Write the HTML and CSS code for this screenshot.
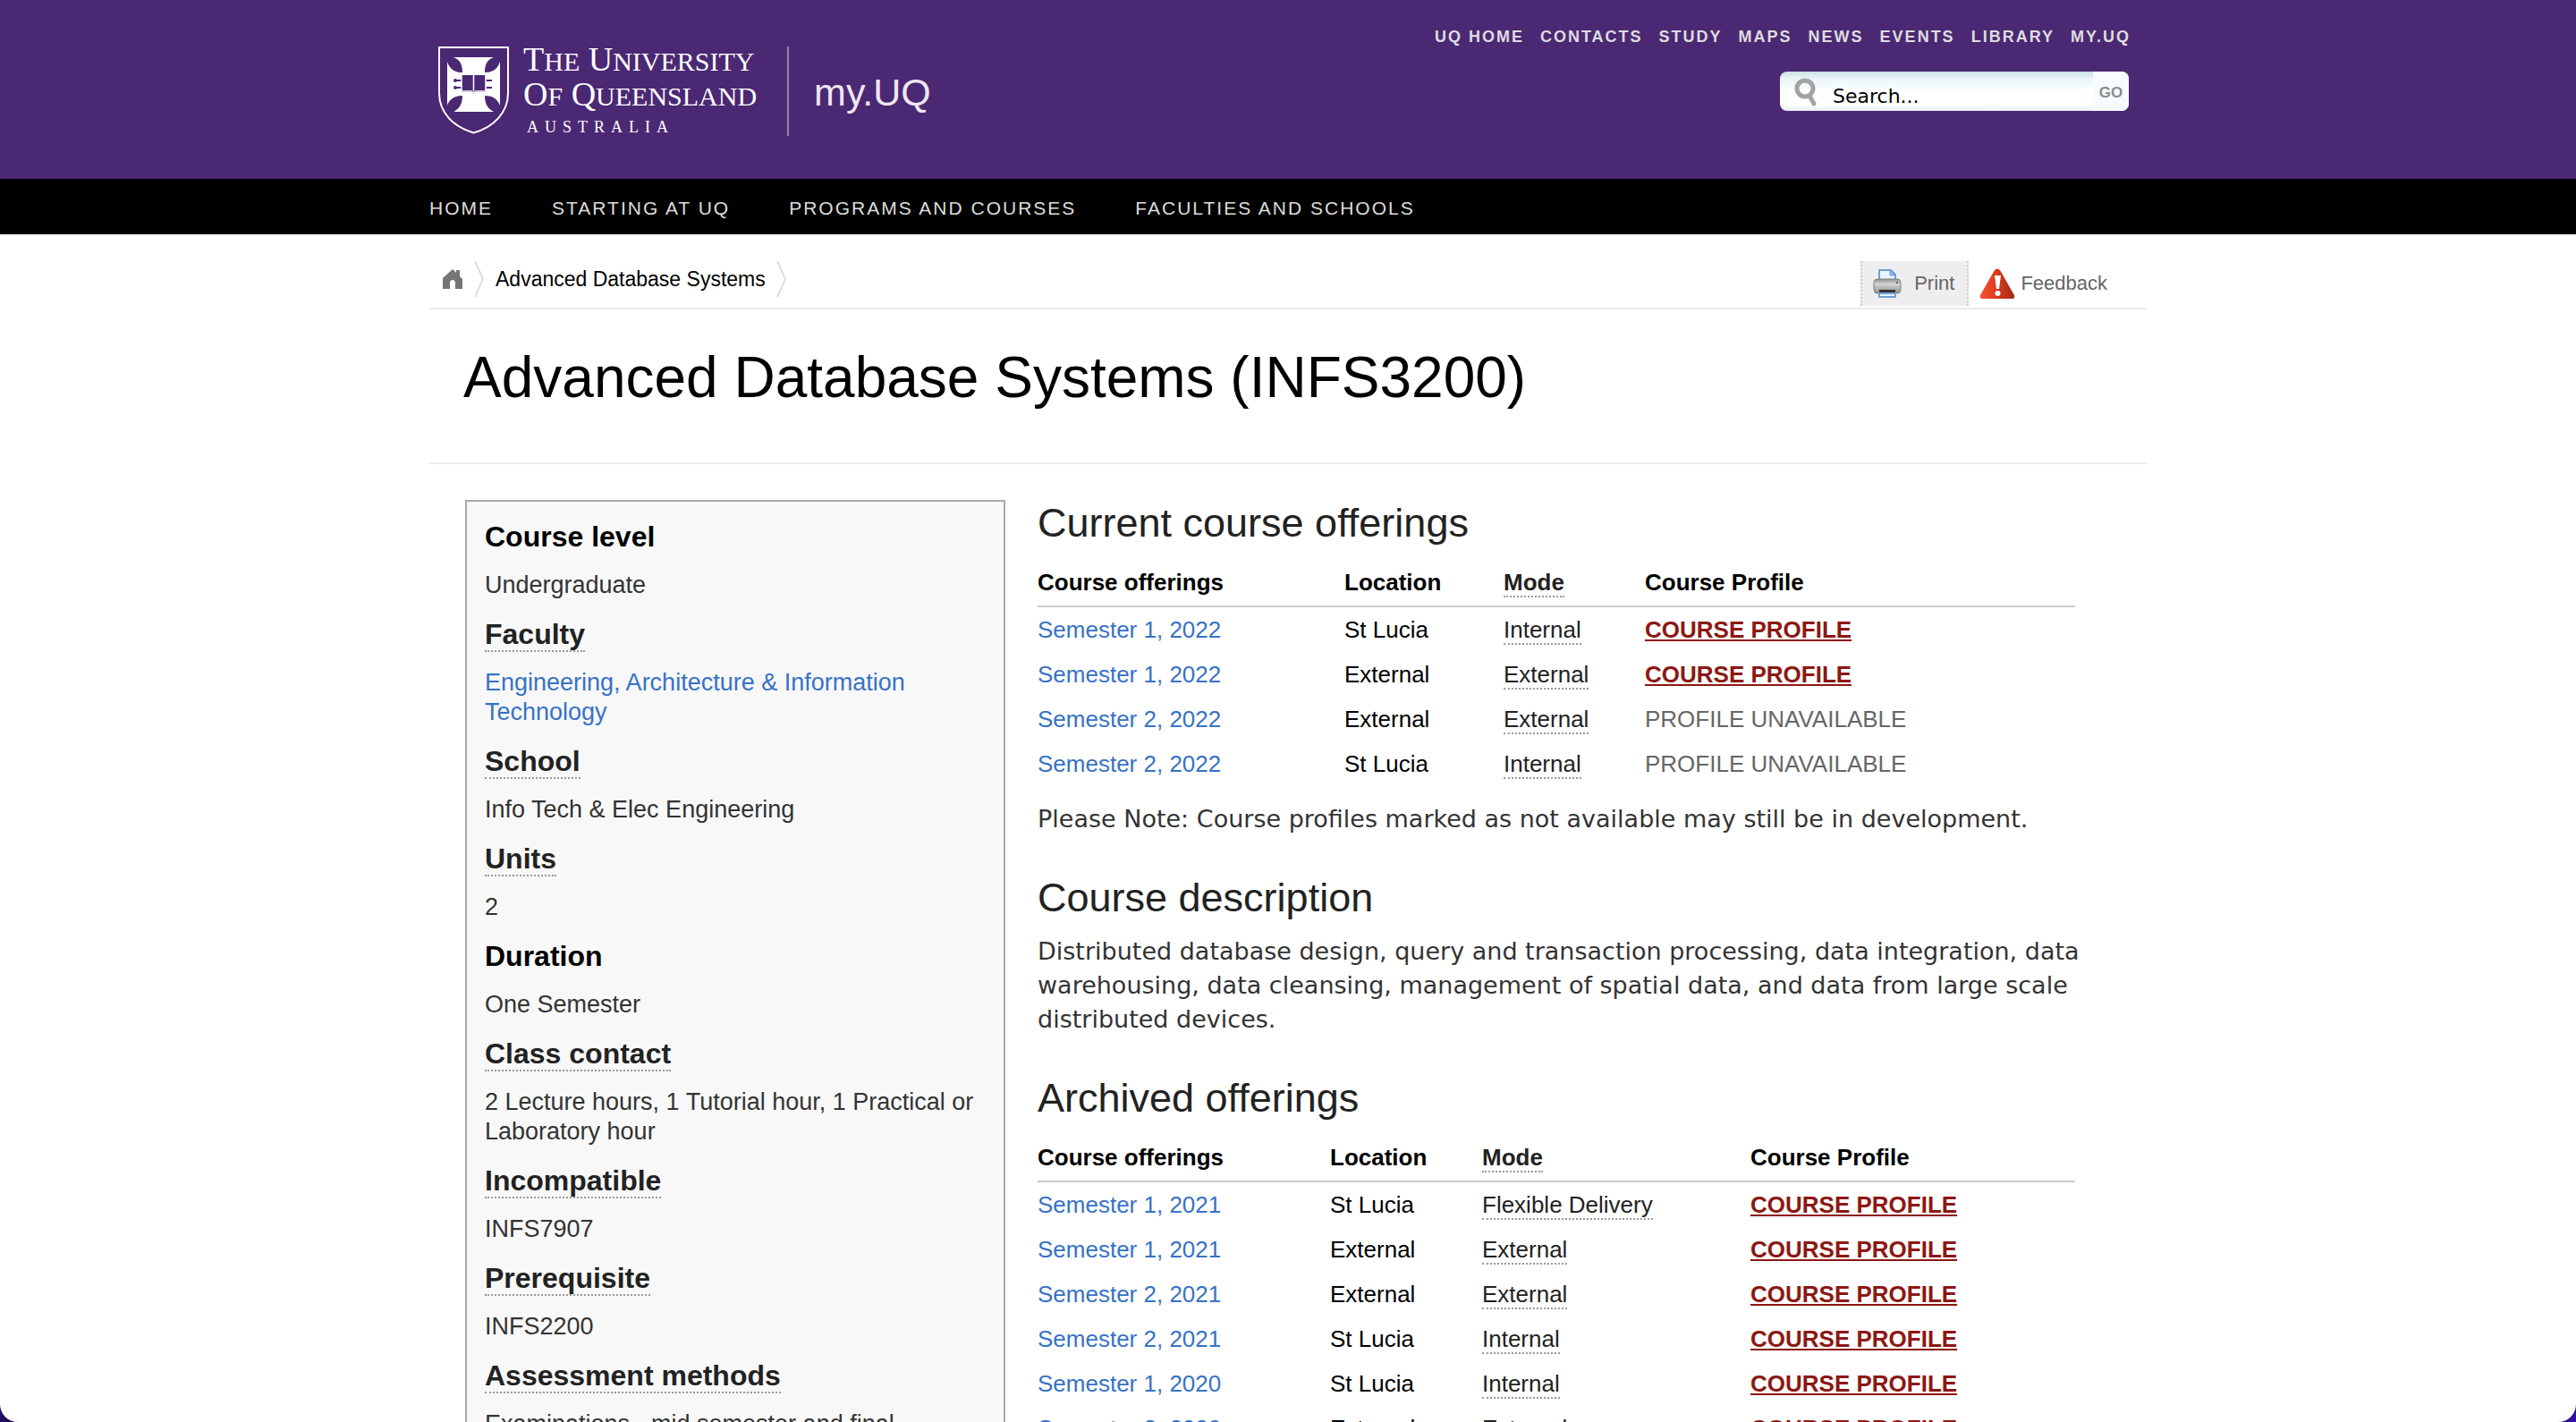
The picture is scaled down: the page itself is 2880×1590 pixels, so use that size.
FILE: index.html
```html
<!DOCTYPE html>
<html lang="en">
<head>
<meta charset="utf-8">
<title>Advanced Database Systems (INFS3200) - my.UQ</title>
<meta name="viewport" content="width=device-width, initial-scale=1">
<link rel="stylesheet" href="styles.css">
</head>
<body>
<div class="window">
  <header class="site-header">
    <div class="container header-inner">
      <a class="brand" href="#">
        <svg class="shield" viewBox="0 0 79 98" width="79" height="98" aria-hidden="true">
          <path d="M1 1H78V52C78 74 62 90 39.500 96.500C17 90 1 74 1 52Z" fill="none" stroke="#fff" stroke-width="2"/>
          <path d="M17 12H62C54 15 52 21 52 29C60 29 66 26 69 17V66C66 58 60 55 52 55C52 62 54 69 62 73H17C25 69 27 62 27 55C19 55 13 58 10 66V17C13 26 19 29 27 29C27 21 25 15 17 12Z" fill="#fff"/>
          <g fill="none" stroke="#4b2873" stroke-width="2">
            <path d="M19 38H27M19 46H27M52 38H60M52 46H60"/>
            <circle cx="19" cy="38" r="1"/><circle cx="19" cy="46" r="1"/>
          </g>
          <path d="M26 32H53V51H42L39.500 53L37 51H26Z" fill="#4b2873"/>
          <path d="M26 32V50H37L39.500 52L42 50H53V32M39.500 32V50" fill="none" stroke="#fff" stroke-width="1.500"/>
        </svg>
        <span class="brand-text">
          <span class="brand-line">T<span class="sc">HE</span> U<span class="sc">NIVERSITY</span></span>
          <span class="brand-line">O<span class="sc">F</span> Q<span class="sc">UEENSLAND</span></span>
          <span class="brand-country">AUSTRALIA</span>
        </span>
        <span class="brand-site">my.UQ</span>
      </a>
      <div class="header-tools">
        <nav class="top-links" aria-label="Site links">
          <a href="#">UQ HOME</a><a href="#">CONTACTS</a><a href="#">STUDY</a><a href="#">MAPS</a><a href="#">NEWS</a><a href="#">EVENTS</a><a href="#">LIBRARY</a><a href="#">MY.UQ</a>
        </nav>
        <form class="search" role="search">
          <label class="search-label" for="q" aria-label="Search">
            <svg width="26" height="34" viewBox="0 0 26 34" aria-hidden="true"><circle cx="13" cy="13" r="9" fill="none" stroke="#a3a3a3" stroke-width="5"/><path d="M18 21L23 30" stroke="#a3a3a3" stroke-width="5" stroke-linecap="round"/></svg>
          </label>
          <input class="search-input" id="q" type="text" value="Search...">
          <button class="search-go" type="submit">GO</button>
        </form>
      </div>
    </div>
  </header>
  <nav class="main-nav" aria-label="Main">
    <div class="container main-nav-inner">
      <a href="#">HOME</a><a href="#">STARTING AT UQ</a><a href="#">PROGRAMS AND COURSES</a><a href="#">FACULTIES AND SCHOOLS</a>
    </div>
  </nav>

  <div class="container">
    <div class="page-bar">
      <nav class="breadcrumb" aria-label="Breadcrumb">
        <a href="#" aria-label="Home"><svg width="24" height="24" viewBox="0 0 24 24"><path d="M12 1L16 5V2H20V9L23 12V23H15V16C15 12 9 12 9 16V23H1V11Z" fill="#757575"/></svg></a>
        <svg class="chevron" width="12" height="40" viewBox="0 0 12 40"><path d="M1 0L10 20L1 40" fill="none" stroke="#ddd" stroke-width="2"/></svg>
        <a href="#">Advanced Database Systems</a>
        <svg class="chevron" width="12" height="40" viewBox="0 0 12 40"><path d="M1 0L10 20L1 40" fill="none" stroke="#ddd" stroke-width="2"/></svg>
      </nav>
      <div class="page-actions">
        <a class="action print" href="#">
          <svg width="32" height="34" viewBox="0 0 32 34" aria-hidden="true">
            <defs><linearGradient id="metal" x1="0" y1="0" x2="0" y2="1"><stop offset="0" stop-color="#909090"/><stop offset=".35" stop-color="#d4d4d4"/><stop offset="1" stop-color="#8d8d8d"/></linearGradient></defs>
            <path d="M7 14V2H20L25 7V14Z" fill="#eaf3fd" stroke="#6f9fdb" stroke-width="2"/>
            <path d="M19 2V8H25Z" fill="#8db6ea" stroke="#6f9fdb"/>
            <rect x="1" y="12" width="30" height="16" rx="4" fill="url(#metal)" stroke="#808080"/>
            <rect x="7" y="24" width="18" height="3" fill="#333"/>
            <path d="M7 28H25V32H7Z" fill="#eaf3fd" stroke="#6f9fdb" stroke-width="2"/>
            <circle cx="27" cy="16" r="1" fill="#444"/>
          </svg>
          <span>Print</span>
        </a>
        <a class="action" href="#">
          <svg width="40" height="34" viewBox="0 0 40 34" aria-hidden="true">
            <defs><linearGradient id="alert" x1="0" y1="0" x2="1" y2="0"><stop offset="0" stop-color="#fb5132"/><stop offset=".5" stop-color="#d8391c"/><stop offset="1" stop-color="#9f2f18"/></linearGradient></defs>
            <path d="M17 2Q20-1 23 2L39 30Q40 34 37 34H3Q0 34 1 30Z" fill="url(#alert)"/>
            <path d="M17 8H24L22 23H19Z" fill="#fff"/><circle cx="20.500" cy="28" r="3" fill="#fff"/>
          </svg>
          <span>Feedback</span>
        </a>
      </div>
    </div>
    <div class="title-bar"><h1>Advanced Database Systems (INFS3200)</h1></div>

    <div class="columns">
      <aside class="summary">
        <dl>
          <dt>Course level</dt><dd>Undergraduate</dd>
          <dt><abbr>Faculty</abbr></dt><dd><a href="#">Engineering, Architecture &amp; Information Technology</a></dd>
          <dt><abbr>School</abbr></dt><dd>Info Tech &amp; Elec Engineering</dd>
          <dt><abbr>Units</abbr></dt><dd>2</dd>
          <dt>Duration</dt><dd>One Semester</dd>
          <dt><abbr>Class contact</abbr></dt><dd>2 Lecture hours, 1 Tutorial hour, 1 Practical or Laboratory hour</dd>
          <dt><abbr>Incompatible</abbr></dt><dd>INFS7907</dd>
          <dt><abbr>Prerequisite</abbr></dt><dd>INFS2200</dd>
          <dt><abbr>Assessment methods</abbr></dt><dd>Examinations - mid semester and final</dd>
        </dl>
      </aside>
      <main class="details">
        <section>
          <h2>Current course offerings</h2>
          <table class="offerings current">
            <thead><tr><th>Course offerings</th><th>Location</th><th><abbr>Mode</abbr></th><th>Course Profile</th></tr></thead>
            <tbody>
              <tr><td><a href="#">Semester 1, 2022</a></td><td>St Lucia</td><td><abbr>Internal</abbr></td><td><a class="profile" href="#">COURSE PROFILE</a></td></tr>
              <tr><td><a href="#">Semester 1, 2022</a></td><td>External</td><td><abbr>External</abbr></td><td><a class="profile" href="#">COURSE PROFILE</a></td></tr>
              <tr><td><a href="#">Semester 2, 2022</a></td><td>External</td><td><abbr>External</abbr></td><td class="none">PROFILE UNAVAILABLE</td></tr>
              <tr><td><a href="#">Semester 2, 2022</a></td><td>St Lucia</td><td><abbr>Internal</abbr></td><td class="none">PROFILE UNAVAILABLE</td></tr>
            </tbody>
          </table>
          <p class="note">Please Note: Course profiles marked as not available may still be in development.</p>
        </section>
        <section>
          <h2>Course description</h2>
          <p>Distributed database design, query and transaction processing, data integration, data warehousing, data cleansing, management of spatial data, and data from large scale distributed devices.</p>
        </section>
        <section>
          <h2>Archived offerings</h2>
          <table class="offerings archived">
            <thead><tr><th>Course offerings</th><th>Location</th><th><abbr>Mode</abbr></th><th>Course Profile</th></tr></thead>
            <tbody>
              <tr><td><a href="#">Semester 1, 2021</a></td><td>St Lucia</td><td><abbr>Flexible Delivery</abbr></td><td><a class="profile" href="#">COURSE PROFILE</a></td></tr>
              <tr><td><a href="#">Semester 1, 2021</a></td><td>External</td><td><abbr>External</abbr></td><td><a class="profile" href="#">COURSE PROFILE</a></td></tr>
              <tr><td><a href="#">Semester 2, 2021</a></td><td>External</td><td><abbr>External</abbr></td><td><a class="profile" href="#">COURSE PROFILE</a></td></tr>
              <tr><td><a href="#">Semester 2, 2021</a></td><td>St Lucia</td><td><abbr>Internal</abbr></td><td><a class="profile" href="#">COURSE PROFILE</a></td></tr>
              <tr><td><a href="#">Semester 1, 2020</a></td><td>St Lucia</td><td><abbr>Internal</abbr></td><td><a class="profile" href="#">COURSE PROFILE</a></td></tr>
              <tr><td><a href="#">Semester 2, 2020</a></td><td>External</td><td><abbr>External</abbr></td><td><a class="profile" href="#">COURSE PROFILE</a></td></tr>
            </tbody>
          </table>
        </section>
      </main>
    </div>
  </div>
</div>
</body>
</html>
```

FILE: styles.css
```css
* { box-sizing: border-box; }

html { background: linear-gradient(90deg, #1f0f5e, #3410a0); }

body {
  margin: 0;
  font-family: "Liberation Sans", Arial, sans-serif;
  font-size: 26px;
  line-height: 30px;
  color: #000;
}

a { color: #3772c6; text-decoration: none; }
svg { display: block; flex: none; }
h1, h2, p, dl, dd { margin: 0; }

/* The page scrolls inside a frame with rounded lower corners */
.window {
  height: 100vh;
  overflow-x: hidden;
  overflow-y: auto;
  scrollbar-width: none;
  background: #fff;
  border-radius: 0 0 20px 20px;
}

.container { max-width: 1920px; margin: 0 auto; }

/* Header */
.site-header { background: #4b2873; }
.header-inner {
  display: flex;
  justify-content: space-between;
  align-items: flex-start;
  min-height: 200px;
  padding: 30px 18px 0 10px;
}
.brand { display: flex; align-items: flex-start; color: #fff; padding-top: 22px; }
.brand-text {
  display: flex;
  flex-direction: column;
  margin: -5px 0 0 16px;
  font-family: "Liberation Serif", "Times New Roman", serif;
}
.brand-line { font-size: 38px; line-height: 39px; white-space: nowrap; }
.sc { font-size: 30px; line-height: 0; }
.brand-country { margin: 6px 0 0 4px; font-size: 18px; line-height: 22px; letter-spacing: 7px; }
.brand-site {
  height: 100px;
  margin-left: 34px;
  padding: 27px 0 0 28px;
  border-left: 2px solid #9880b0;
  font-size: 43px;
  line-height: 48px;
  color: #eee6f2;
}
.header-tools { display: flex; flex-direction: column; align-items: flex-end; gap: 28px; }
.top-links { display: flex; gap: 18px; font-size: 18px; line-height: 22px; font-weight: bold; letter-spacing: 2px; }
.top-links a { color: #dedcdf; white-space: nowrap; }
.search {
  display: flex;
  align-items: stretch;
  width: 390px;
  height: 44px;
  margin-right: 2px;
  overflow: hidden;
  border-radius: 8px;
  background: linear-gradient(#cbdfe3, #eaf5f8 18%, #fff 50%, #fff 85%, #e6eff3);
}
.search-label { padding: 6px 0 0 15px; }
.search-input {
  flex: 1;
  min-width: 0;
  padding: 11px 0 0 18px;
  border: 0;
  background: none;
  font: 22px/26px "DejaVu Sans", Verdana, sans-serif;
  color: #000;
}
.search-go {
  width: 40px;
  padding: 3px 0 0;
  border: 0;
  background: #f6fbfe;
  font: bold 17px/20px "Liberation Sans", Arial, sans-serif;
  color: #8c8c8c;
}

/* Main navigation */
.main-nav { background: #000; }
.main-nav-inner { display: flex; gap: 66px; padding: 20px 0 16px; font-size: 21px; line-height: 26px; letter-spacing: 2px; }
.main-nav a { color: #ddd; }

/* Breadcrumb and page actions */
.page-bar {
  display: flex;
  justify-content: space-between;
  padding: 30px 44px 2px 14px;
  border-bottom: 2px solid #ebebeb;
}
.breadcrumb { display: flex; align-items: center; gap: 12px; height: 40px; font-size: 23px; line-height: 32px; }
.breadcrumb a { color: #000; }
.page-actions { display: flex; font-size: 22px; }
.action { display: flex; align-items: center; gap: 6px; height: 50px; padding: 0 0 0 12px; color: #666; }
.print { gap: 14px; padding: 0 14px 0 12px; background: #eee; border: dotted #ccc; border-width: 0 2px; }

.title-bar { padding: 40px 38px 59px; border-bottom: 2px solid #ebebeb; }
h1 { font-size: 64px; line-height: 72px; font-weight: normal; }

/* Two-column body */
.columns { display: flex; gap: 36px; padding: 40px 60px 40px 40px; }

.summary {
  flex: 0 0 604px;
  padding: 21px 20px 20px;
  background: #f8f8f8;
  border: 2px solid #aaa;
}
.summary dt { font-size: 32px; line-height: 36px; font-weight: bold; }
.summary dd { margin: 20px 0; font-size: 27px; line-height: 33px; color: #333; }
abbr { color: #222; border-bottom: 2px dotted #999; }

.details { flex: 1; min-width: 0; }
.details section + section { margin-top: 43px; }
h2 { margin-bottom: 15px; font-size: 45px; line-height: 52px; font-weight: normal; color: #222; }
.details p { font-family: "DejaVu Sans", Verdana, sans-serif; font-size: 27px; line-height: 38px; color: #333; }
.details .note { margin-top: 18px; }

.offerings { width: calc(100% - 20px); table-layout: fixed; border-collapse: separate; border-spacing: 0; }
.offerings th { padding: 10px 0 11px; border-bottom: 2px solid #ccc; text-align: left; }
.offerings td { padding: 10px 0; }
.current th:nth-child(1) { width: 343px; }
.current th:nth-child(2) { width: 178px; }
.current th:nth-child(3) { width: 158px; }
.archived th:nth-child(1) { width: 327px; }
.archived th:nth-child(2) { width: 170px; }
.archived th:nth-child(3) { width: 300px; }
.profile { color: #8c1813; font-weight: bold; text-decoration: underline; }
.none { color: #666; }
```
